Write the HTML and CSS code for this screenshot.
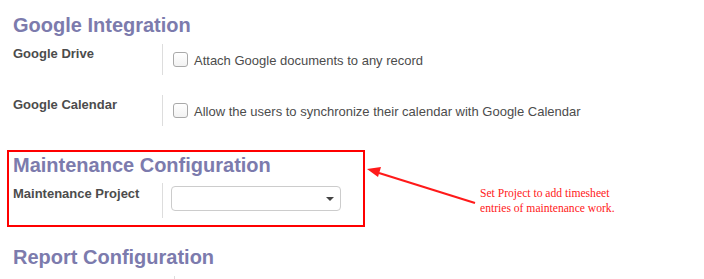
FILE: index.html
```html
<!DOCTYPE html>
<html lang="en">
<head>
  <meta charset="UTF-8" />
  <title>Settings</title>
  <link rel="stylesheet" href="styles.css">
</head>
<body>
  <div class="settings">
    <div class="section">
      <h2>Google Integration</h2>
      <div class="setting">
        <div class="label">Google Drive</div>
        <div class="pane">
          <label class="check"><span class="box"></span>Attach Google documents to any record</label>
        </div>
      </div>
      <div class="setting">
        <div class="label">Google Calendar</div>
        <div class="pane">
          <label class="check"><span class="box"></span>Allow the users to synchronize their calendar with Google Calendar</label>
        </div>
      </div>
    </div>

    <div class="section highlight">
      <h2>Maintenance Configuration</h2>
      <div class="setting tall">
        <div class="label">Maintenance Project</div>
        <div class="pane">
          <div class="select"><span class="caret"></span></div>
        </div>
      </div>
    </div>

    <div class="section">
      <h2>Report Configuration</h2>
      <div class="setting stub">
        <div class="label"></div>
        <div class="pane"></div>
      </div>
    </div>

    <svg class="arrow" width="120" height="50" viewBox="0 0 120 50">
      <line x1="114" y1="45" x2="18" y2="15" stroke="#ff1a1a" stroke-width="2.2" />
      <polygon points="6,11 20,9 17,19" fill="#ff1a1a" />
    </svg>
    <p class="note">Set Project to add timesheet<br>entries of maintenance work.</p>
  </div>
</body>
</html>
```

FILE: styles.css
```css
body {
  margin: 0;
  background: #fff;
  font-family: 'Liberation Sans', Arial, sans-serif;
  color: #4c4c4c;
}

.settings {
  position: relative;
  padding: 12px 0 0 13px;
}

h2 {
  margin: 0 0 6px;
  font-size: 20px;
  line-height: 26px;
  font-weight: bold;
  color: #7c7bad;
}

.setting {
  display: flex;
  margin-bottom: 20px;
}

.label {
  width: 149px;
  padding-top: 1px;
  font-size: 13px;
  line-height: 18px;
  font-weight: bold;
}

.pane {
  border-left: 1px solid #ddd;
  padding: 8px 0 5px 10px;
}

.check {
  display: flex;
  align-items: flex-start;
  font-size: 13px;
  line-height: 18px;
}

.box {
  width: 13px;
  height: 13px;
  margin: 0 6px 0 0;
  border: 1px solid #a9a9a9;
  border-radius: 3px;
  background: linear-gradient(#fff, #f2f2f2);
}

.highlight {
  width: 350px;
  margin: 24px 0 17px -6px;
  padding: 0 0 7px 4px;
  border: 2px solid #ff0000;
}

.highlight h2 {
  margin-bottom: 5px;
}

.tall {
  margin-bottom: 0;
}

.tall .label {
  padding-top: 2px;
}

.tall .pane {
  padding: 3px 0 7px 8px;
}

.select {
  position: relative;
  width: 168px;
  height: 23px;
  border: 1px solid #ccc;
  border-radius: 4px;
}

.caret {
  position: absolute;
  right: 6px;
  top: 10px;
  border-left: 4px solid transparent;
  border-right: 4px solid transparent;
  border-top: 4px solid #444;
}

.stub {
  margin-bottom: 0;
}

.stub .label {
  width: 161px;
}

.stub .pane {
  height: 6px;
  padding: 0;
}

.arrow {
  position: absolute;
  left: 361px;
  top: 158px;
}

.note {
  position: absolute;
  left: 480px;
  top: 186px;
  margin: 0;
  font-family: 'Liberation Serif', 'Times New Roman', serif;
  font-size: 11.6px;
  line-height: 15px;
  color: #ff2020;
}
```
